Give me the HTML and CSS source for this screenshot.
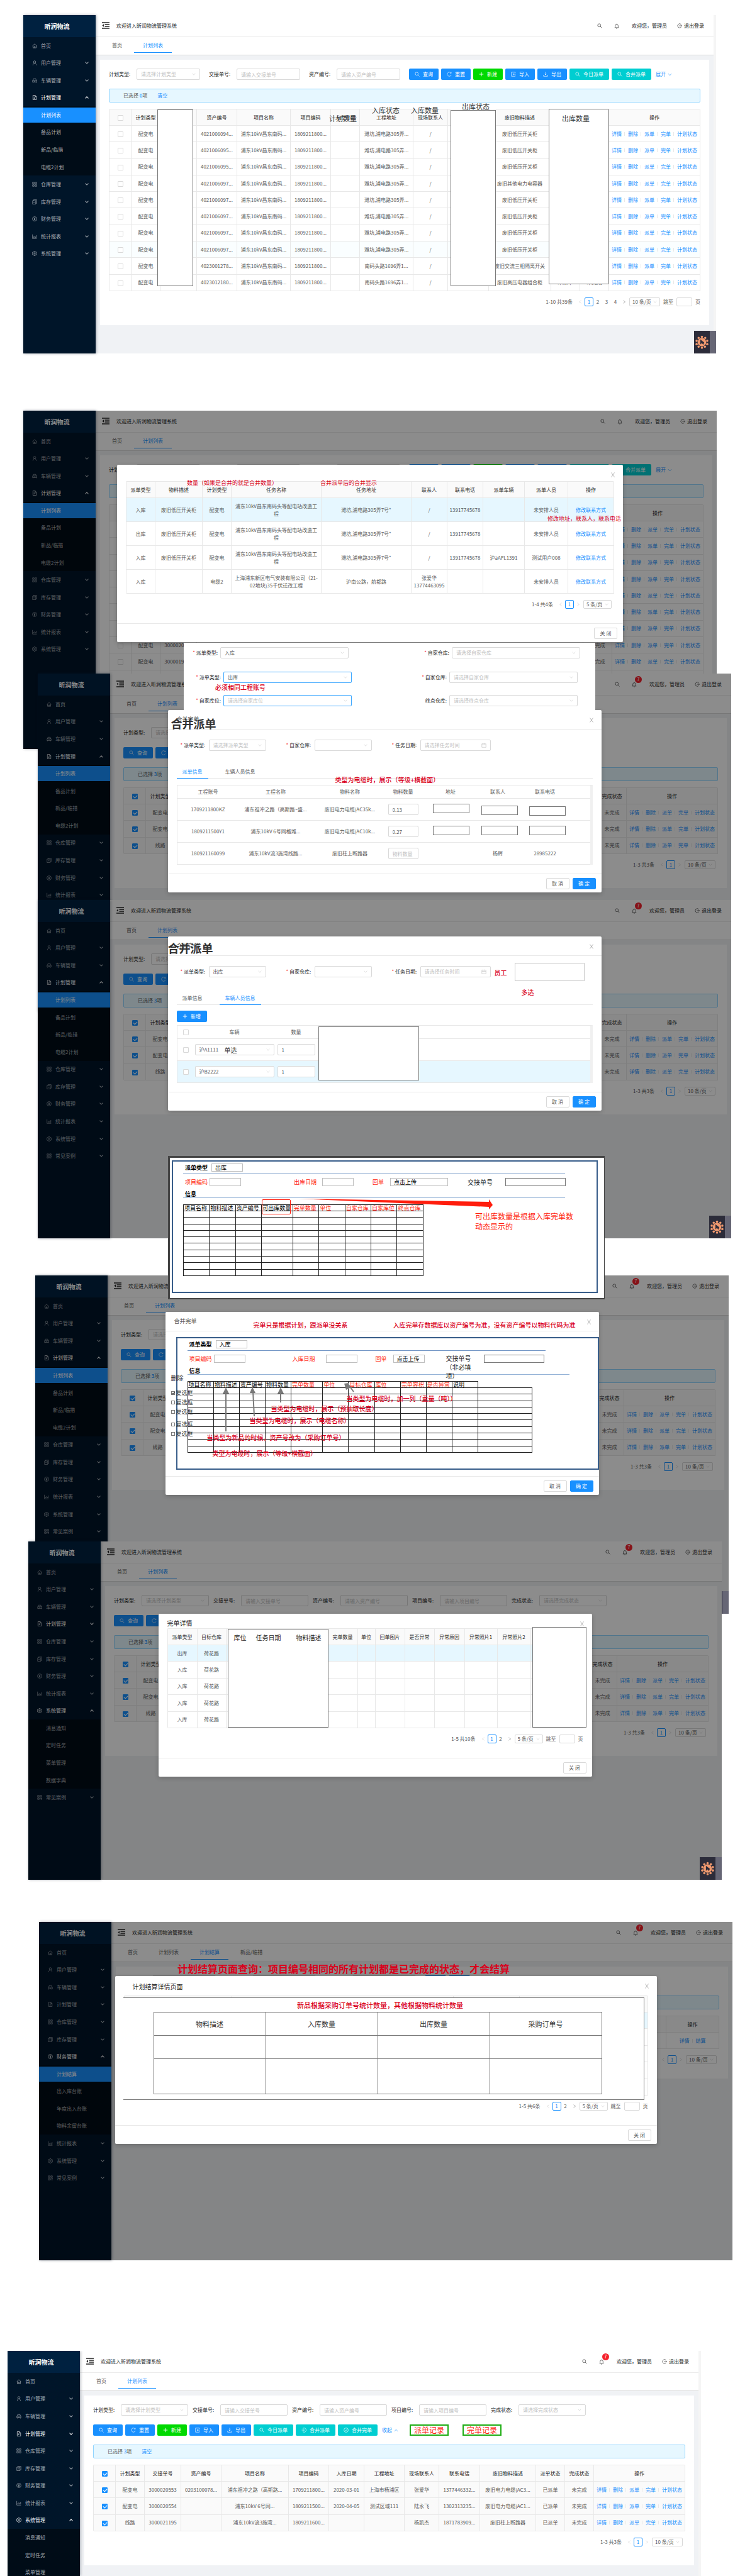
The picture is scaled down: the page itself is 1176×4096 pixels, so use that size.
FILE: index.html
```html
<!DOCTYPE html>
<html lang="zh-CN">
<head>
<meta charset="utf-8">
<title>昕润物流管理系统</title>
<link rel="stylesheet" href="styles.css">
</head>
<body>
<svg class="defs" aria-hidden="true">
  <symbol id="home" viewBox="0 0 16 16"><path d="M1 8.2 8 1.6l7 6.6M3 7v7.3h10V7M6.3 14.3V10h3.4v4.3"/></symbol>
  <symbol id="user" viewBox="0 0 16 16"><circle cx="8" cy="5" r="3.6"/><path d="M2.6 15.5c.2-4 2-6.3 5.4-6.9 3.4.6 5.2 2.9 5.4 6.9"/></symbol>
  <symbol id="car" viewBox="0 0 16 16"><path d="M1.5 7.5h13V13h-13zM3 7.500l1.300-5h7.400l1.300 5M3 13v2M13 13v2M5.500 10.500h5"/></symbol>
  <symbol id="file" viewBox="0 0 16 16"><path d="M2.700 1h7l3.800 3.800V15H2.700zM9.500 1v4h4M5.300 8h5.500M5.300 11h3.500"/></symbol>
  <symbol id="grid" viewBox="0 0 16 16"><path d="M1.500 1.500h5v5h-5zM9.500 1.500h5v5h-5zM1.500 9.500h5v5h-5zM9.500 9.500h5v5h-5z"/></symbol>
  <symbol id="copy" viewBox="0 0 16 16"><path d="M1.500 4h10v11h-10zM4.500 4V1.300h10V12.500h-3M4 9.500h5"/></symbol>
  <symbol id="pay" viewBox="0 0 16 16"><circle cx="8" cy="8" r="6.900"/><path d="m5.500 4 2.500 4 2.500-4M8 8v4.500M5.800 8.500h4.400M5.800 10.500h4.400"/></symbol>
  <symbol id="chart" viewBox="0 0 16 16"><path d="M1.300 1.500v13h13.500M4.700 12V8M8 12V6M11 12V8.500M13.500 12V4"/></symbol>
  <symbol id="gear" viewBox="0 0 16 16"><path d="M6.300 1h3.400l.5 2.100 1.600.9 2.100-.7 1.600 2.900L13.900 8l1.600 1.800-1.600 2.900-2.100-.7-1.600.9L9.700 15H6.300l-.5-2.100-1.600-.9-2.100.7L.5 9.800 2.100 8 .5 6.200l1.600-2.900 2.100.7 1.600-.9z"/><circle cx="8" cy="8" r="2.400"/></symbol>
  <symbol id="qr" viewBox="0 0 16 16"><path d="M1.500 1.500h5v5h-5zM9.500 1.500h5v5h-5zM1.500 9.500h5v5h-5zM9.500 9v6M12 9v3h3V9M12 14.500h3M4 3.500v1M12 3.500v1M4 11.500v1"/></symbol>
  <symbol id="search" viewBox="0 0 16 16"><circle cx="6.500" cy="6.500" r="4.800"/><path d="m10 10 5 5"/></symbol>
  <symbol id="bell" viewBox="0 0 16 16"><path d="M1.500 12.800h13M3.300 12.800V7a4.700 4.700 0 0 1 9.400 0v5.800M8 .5v2M6.300 15.200h3.400"/></symbol>
  <symbol id="exit" viewBox="0 0 16 16"><path d="M13 3.500A6.500 6.500 0 1 0 13 12.500M6.500 8H15M12.500 5.500 15 8l-2.500 2.500"/></symbol>
  <symbol id="fold" viewBox="0 0 16 14"><path d="M0 1h16M6 5h10M6 9h10M0 13h16" stroke-width="1.700"/><path d="M4 4v6L.5 7z" fill="currentColor" stroke="none"/></symbol>
  <symbol id="reload" viewBox="0 0 16 16"><path d="M13.500 4.500A6.500 6.500 0 1 0 14 10.500M14 1.500v3.300h-3.300"/></symbol>
  <symbol id="plus" viewBox="0 0 16 16"><path d="M8 1.500v13M1.500 8h13" stroke-width="1.800"/></symbol>
  <symbol id="import" viewBox="0 0 16 16"><path d="M13.500 4V1.500h-12v13h12V12M15 8H6M8.500 5.500 6 8l2.500 2.500"/></symbol>
  <symbol id="down" viewBox="0 0 16 16"><path d="M8 1v9M5.500 7.500 8 10l2.500-2.500M1.500 10.500v4h13v-4"/></symbol>
  <symbol id="login" viewBox="0 0 16 16"><path d="M4 3a6.700 6.700 0 1 1 0 10M1 8h8M6.500 5.500 9 8l-2.500 2.500"/></symbol>
  <symbol id="check" viewBox="0 0 16 16"><circle cx="8" cy="8" r="6.900"/><path d="m5 8 2.300 2.300L11 5.500"/></symbol>
  <symbol id="cal" viewBox="0 0 16 16"><path d="M1.500 3.500h13v11h-13zM1.500 7h13M5 1v4M11 1v4"/></symbol>
  <symbol id="v" viewBox="0 0 16 16"><path d="m2 4.500 6 7 6-7"/></symbol>
  <symbol id="up" viewBox="0 0 16 16"><path d="m2 11.500 6-7 6 7"/></symbol>
  <symbol id="lt" viewBox="0 0 16 16"><path d="m12 2-8 6 8 6"/></symbol>
  <symbol id="gt" viewBox="0 0 16 16"><path d="m4 2 8 6-8 6"/></symbol>
  <symbol id="x" viewBox="0 0 12 16"><path d="m1 1 10 14M11 1 1 15"/></symbol>
  <symbol id="sun" viewBox="0 0 40 40"><g fill="#f0996f" stroke="none"><circle cx="20" cy="20" r="13"/><circle cx="20" cy="4" r="3.400"/><circle cx="30" cy="7" r="3.400"/><circle cx="36" cy="16" r="3.400"/><circle cx="36" cy="26" r="3.400"/><circle cx="29" cy="34" r="3.400"/><circle cx="20" cy="37" r="3.400"/><circle cx="10" cy="34" r="3.400"/><circle cx="4" cy="26" r="3.400"/><circle cx="4" cy="16" r="3.400"/><circle cx="10" cy="7" r="3.400"/></g><path d="M15 12v15l5-4 4 5 3-7-12-9z" fill="#2c2c3a" stroke="none"/></symbol>
</svg>

<main class="board">

<!-- 1: plan list -->
<section class="win w1">
  <aside class="side"><h2>昕润物流</h2>
    <ul class="menu m13">
      <li><a href="#"><svg><use href="#home"/></svg>首页</a></li>
      <li class="g"><a href="#"><svg><use href="#user"/></svg>用户管理</a></li>
      <li class="g"><a href="#"><svg><use href="#car"/></svg>车辆管理</a></li>
      <li class="g open"><a href="#"><svg><use href="#file"/></svg>计划管理</a></li>
      <li class="sub on"><a href="#">计划列表</a></li>
      <li class="sub"><a href="#">备品计划</a></li>
      <li class="sub"><a href="#">新品/临措</a></li>
      <li class="sub"><a href="#">电缆2计划</a></li>
      <li class="g"><a href="#"><svg><use href="#grid"/></svg>仓库管理</a></li>
      <li class="g"><a href="#"><svg><use href="#copy"/></svg>库存管理</a></li>
      <li class="g"><a href="#"><svg><use href="#pay"/></svg>财务管理</a></li>
      <li class="g"><a href="#"><svg><use href="#chart"/></svg>统计报表</a></li>
      <li class="g"><a href="#"><svg><use href="#gear"/></svg>系统管理</a></li>
    </ul>
  </aside>
  <div class="main">
    <header class="top"><svg class="fold"><use href="#fold"/></svg><span>欢迎进入昕润物流管理系统</span>
      <div class="tools"><svg><use href="#search"/></svg><span class="bell"><svg><use href="#bell"/></svg></span><span>欢迎您，管理员</span><a href="#"><svg><use href="#exit"/></svg>退出登录</a></div></header>
    <nav class="tabs"><a href="#">首页</a><a href="#" class="on">计划列表</a></nav>
    <div class="panel p1">
      <form class="filter">
        <label><span>计划类型:</span><span class="sel"><select class="ph"><option>请选择计划类型</option></select><svg><use href="#v"/></svg></span></label>
        <label><span>交接单号:</span><input type="text" placeholder="请输入交接单号"></label>
        <label><span>资产编号:</span><input type="text" placeholder="请输入资产编号"></label>
        <div class="btns"><button type="button" class="btn"><svg><use href="#search"/></svg>查询</button><button type="button" class="btn"><svg><use href="#reload"/></svg>重置</button><button type="button" class="btn green"><svg><use href="#plus"/></svg>新建</button><button type="button" class="btn"><svg><use href="#import"/></svg>导入</button><button type="button" class="btn"><svg><use href="#down"/></svg>导出</button><button type="button" class="btn cyan"><svg><use href="#search"/></svg>今日派单</button><button type="button" class="btn cyan"><svg><use href="#search"/></svg>合并派单</button><a href="#" class="more">展开<svg><use href="#v"/></svg></a></div>
      </form>
      <div class="alert">已选择 <b>0</b>项<a href="#">清空</a></div>
      <table class="grid t1">
        <thead><tr><th><input type="checkbox" aria-label="全选"></th><th>计划类型</th><th></th><th>资产编号</th><th>项目名称</th><th>项目编码</th><th>入库日期</th><th>工程地址</th><th>现场联系人</th><th></th><th>废旧物料描述</th><th></th><th></th><th>操作</th></tr></thead>
        <tbody>
        <tr><td><input type="checkbox" aria-label="选择"></td><td>配变电</td><td></td><td>4021006094...</td><td>浦东10kV昌东南码...</td><td>1809211800...</td><td></td><td>潍坊,浦电路305弄...</td><td>/</td><td></td><td>废旧低压开关柜</td><td></td><td></td><td class="ops"><a href="#">详情</a><a href="#">删除</a><a href="#">派单</a><a href="#">完单</a><a href="#">计划状态</a></td></tr>
        <tr><td><input type="checkbox" aria-label="选择"></td><td>配变电</td><td></td><td>4021006095...</td><td>浦东10kV昌东南码...</td><td>1809211800...</td><td></td><td>潍坊,浦电路305弄...</td><td>/</td><td></td><td>废旧低压开关柜</td><td></td><td></td><td class="ops"><a href="#">详情</a><a href="#">删除</a><a href="#">派单</a><a href="#">完单</a><a href="#">计划状态</a></td></tr>
        <tr><td><input type="checkbox" aria-label="选择"></td><td>配变电</td><td></td><td>4021006095...</td><td>浦东10kV昌东南码...</td><td>1809211800...</td><td></td><td>潍坊,浦电路305弄...</td><td>/</td><td></td><td>废旧低压开关柜</td><td></td><td></td><td class="ops"><a href="#">详情</a><a href="#">删除</a><a href="#">派单</a><a href="#">完单</a><a href="#">计划状态</a></td></tr>
        <tr><td><input type="checkbox" aria-label="选择"></td><td>配变电</td><td></td><td>4021006097...</td><td>浦东10kV昌东南码...</td><td>1809211800...</td><td></td><td>潍坊,浦电路305弄...</td><td>/</td><td></td><td>废旧其他电力电容器</td><td></td><td></td><td class="ops"><a href="#">详情</a><a href="#">删除</a><a href="#">派单</a><a href="#">完单</a><a href="#">计划状态</a></td></tr>
        <tr><td><input type="checkbox" aria-label="选择"></td><td>配变电</td><td></td><td>4021006097...</td><td>浦东10kV昌东南码...</td><td>1809211800...</td><td></td><td>潍坊,浦电路305弄...</td><td>/</td><td></td><td>废旧低压开关柜</td><td></td><td></td><td class="ops"><a href="#">详情</a><a href="#">删除</a><a href="#">派单</a><a href="#">完单</a><a href="#">计划状态</a></td></tr>
        <tr><td><input type="checkbox" aria-label="选择"></td><td>配变电</td><td></td><td>4021006097...</td><td>浦东10kV昌东南码...</td><td>1809211800...</td><td></td><td>潍坊,浦电路305弄...</td><td>/</td><td></td><td>废旧低压开关柜</td><td></td><td></td><td class="ops"><a href="#">详情</a><a href="#">删除</a><a href="#">派单</a><a href="#">完单</a><a href="#">计划状态</a></td></tr>
        <tr><td><input type="checkbox" aria-label="选择"></td><td>配变电</td><td></td><td>4021006097...</td><td>浦东10kV昌东南码...</td><td>1809211800...</td><td></td><td>潍坊,浦电路305弄...</td><td>/</td><td></td><td>废旧低压开关柜</td><td></td><td></td><td class="ops"><a href="#">详情</a><a href="#">删除</a><a href="#">派单</a><a href="#">完单</a><a href="#">计划状态</a></td></tr>
        <tr class="tint"><td><input type="checkbox" aria-label="选择"></td><td>配变电</td><td></td><td>4021006097...</td><td>浦东10kV昌东南码...</td><td>1809211800...</td><td></td><td>潍坊,浦电路305弄...</td><td>/</td><td></td><td>废旧低压开关柜</td><td></td><td></td><td class="ops"><a href="#">详情</a><a href="#">删除</a><a href="#">派单</a><a href="#">完单</a><a href="#">计划状态</a></td></tr>
        <tr><td><input type="checkbox" aria-label="选择"></td><td>配变电</td><td></td><td>4023001278...</td><td>浦东10kV昌东南码...</td><td>1809211800...</td><td></td><td>南码头路1696弄1...</td><td>/</td><td></td><td>废旧交流三相隔离开关</td><td></td><td></td><td class="ops"><a href="#">详情</a><a href="#">删除</a><a href="#">派单</a><a href="#">完单</a><a href="#">计划状态</a></td></tr>
        <tr><td><input type="checkbox" aria-label="选择"></td><td>配变电</td><td></td><td>4023012180...</td><td>浦东10kV昌东南码...</td><td>1809211800...</td><td></td><td>南码头路1696弄1...</td><td>/</td><td></td><td>废旧高压电器组合柜</td><td>未派单</td><td>未完成</td><td class="ops"><a href="#">详情</a><a href="#">删除</a><a href="#">派单</a><a href="#">完单</a><a href="#">计划状态</a></td></tr>
        </tbody>
      </table>
      <div class="pager"><span>1-10 共39条</span><button type="button" aria-label="上一页"><svg class="dim"><use href="#lt"/></svg></button><button type="button" class="on">1</button><button type="button">2</button><button type="button">3</button><button type="button">4</button><button type="button" aria-label="下一页"><svg><use href="#gt"/></svg></button><span class="sel"><select aria-label="每页条数"><option>10 条/页</option></select><svg><use href="#v"/></svg></span><label>跳至<input type="text">页</label></div>
    </div>
  </div>
  <i class="scroll"></i>
  <p class="mark n-outstate">出库状态</p>
  <div class="cover c-order"></div><div class="cover c-out"></div><div class="cover c-qty"></div>
  <p class="mark n-plan">计划数量</p><p class="mark n-instate">入库状态</p><p class="mark n-inqty">入库数量</p><p class="mark n-outqty">出库数量</p>
  <div class="widget"><svg><use href="#sun"/></svg></div>
</section>

<!-- 2: dispatch records dialog -->
<section class="win w2">
  <aside class="side"><h2>昕润物流</h2>
    <ul class="menu m13">
      <li><a href="#"><svg><use href="#home"/></svg>首页</a></li>
      <li class="g"><a href="#"><svg><use href="#user"/></svg>用户管理</a></li>
      <li class="g"><a href="#"><svg><use href="#car"/></svg>车辆管理</a></li>
      <li class="g open"><a href="#"><svg><use href="#file"/></svg>计划管理</a></li>
      <li class="sub on"><a href="#">计划列表</a></li>
      <li class="sub"><a href="#">备品计划</a></li>
      <li class="sub"><a href="#">新品/临措</a></li>
      <li class="sub"><a href="#">电缆2计划</a></li>
      <li class="g"><a href="#"><svg><use href="#grid"/></svg>仓库管理</a></li>
      <li class="g"><a href="#"><svg><use href="#copy"/></svg>库存管理</a></li>
      <li class="g"><a href="#"><svg><use href="#pay"/></svg>财务管理</a></li>
      <li class="g"><a href="#"><svg><use href="#chart"/></svg>统计报表</a></li>
      <li class="g"><a href="#"><svg><use href="#gear"/></svg>系统管理</a></li>
    </ul>
  </aside>
  <div class="main">
    <header class="top"><svg class="fold"><use href="#fold"/></svg><span>欢迎进入昕润物流管理系统</span>
      <div class="tools"><svg><use href="#search"/></svg><span class="bell"><svg><use href="#bell"/></svg></span><span>欢迎您，管理员</span><a href="#"><svg><use href="#exit"/></svg>退出登录</a></div></header>
    <nav class="tabs"><a href="#">首页</a><a href="#" class="on">计划列表</a></nav>
    <div class="panel p2">
      <form class="filter">
        <label><span>计划类型:</span><span class="sel"><select aria-label="计划类型"></select></span></label>
        <label><span></span><input type="text" aria-label="交接单号"></label>
        <label><span></span><input type="text" aria-label="资产编号"></label>
        <div class="btns"><button type="button" class="btn"><svg><use href="#search"/></svg>查询</button><button type="button" class="btn"><svg><use href="#reload"/></svg>重置</button><button type="button" class="btn green"><svg><use href="#plus"/></svg>新建</button><button type="button" class="btn"><svg><use href="#import"/></svg>导入</button><button type="button" class="btn"><svg><use href="#down"/></svg>导出</button><button type="button" class="btn cyan"><svg><use href="#search"/></svg>今日派单</button><button type="button" class="btn cyan"><svg><use href="#search"/></svg>合并派单</button><a href="#" class="more">展开<svg><use href="#v"/></svg></a></div>
      </form>
      <div class="alert"></div>
      <table class="grid t2">
        <thead><tr><th></th><th></th><th></th><th></th><th></th><th>操作</th></tr></thead>
        <tbody>
        <tr><td></td><td></td><td></td><td></td><td></td><td class="ops"><a href="#">详情</a><a href="#">删除</a><a href="#">派单</a><a href="#">完单</a><a href="#">计划状态</a></td></tr>
        <tr><td></td><td></td><td></td><td></td><td></td><td class="ops"><a href="#">详情</a><a href="#">删除</a><a href="#">派单</a><a href="#">完单</a><a href="#">计划状态</a></td></tr>
        <tr><td></td><td></td><td></td><td></td><td></td><td class="ops"><a href="#">详情</a><a href="#">删除</a><a href="#">派单</a><a href="#">完单</a><a href="#">计划状态</a></td></tr>
        <tr><td></td><td></td><td></td><td></td><td></td><td class="ops"><a href="#">详情</a><a href="#">删除</a><a href="#">派单</a><a href="#">完单</a><a href="#">计划状态</a></td></tr>
        <tr><td></td><td></td><td></td><td></td><td></td><td class="ops"><a href="#">详情</a><a href="#">删除</a><a href="#">派单</a><a href="#">完单</a><a href="#">计划状态</a></td></tr>
        <tr><td></td><td></td><td></td><td></td><td></td><td class="ops"><a href="#">详情</a><a href="#">删除</a><a href="#">派单</a><a href="#">完单</a><a href="#">计划状态</a></td></tr>
        <tr><td></td><td></td><td></td><td></td><td></td><td class="ops"><a href="#">详情</a><a href="#">删除</a><a href="#">派单</a><a href="#">完单</a><a href="#">计划状态</a></td></tr>
        <tr><td><input type="checkbox" aria-label="选择"></td><td>配变电</td><td>3000020550</td><td></td><td>未完成</td><td class="ops"><a href="#">详情</a><a href="#">删除</a><a href="#">派单</a><a href="#">完单</a><a href="#">计划状态</a></td></tr>
        <tr><td><input type="checkbox" aria-label="选择"></td><td>配变电</td><td>3000019550</td><td></td><td>未完成</td><td class="ops"><a href="#">详情</a><a href="#">删除</a><a href="#">派单</a><a href="#">完单</a><a href="#">计划状态</a></td></tr>
        <tr><td></td><td></td><td></td><td></td><td></td><td></td></tr>
        </tbody>
      </table>
    </div>
  </div>
  <div class="mask"><div class="modal d2" role="dialog" aria-label="派单记录">
    <button type="button" class="close" aria-label="关闭"><svg><use href="#x"/></svg></button>
    <div class="body">
      <table class="grid t-disp">
        <thead><tr><th>派单类型</th><th>物料描述</th><th>计划类型</th><th>任务名称</th><th>任务地址</th><th>联系人</th><th>联系电话</th><th>派单车辆</th><th>派单人员</th><th>操作</th></tr></thead>
        <tbody>
        <tr class="hit"><td>入库</td><td>废旧低压开关柜</td><td>配变电</td><td>浦东10kV昌东南码头等配电站改造工程</td><td>潍坊,浦电路305弄7号*</td><td>/</td><td>13917745678</td><td></td><td>未安排人员</td><td><a href="#">修改联系方式</a></td></tr>
        <tr><td>出库</td><td>废旧低压开关柜</td><td>配变电</td><td>浦东10kV昌东南码头等配电站改造工程</td><td>潍坊,浦电路305弄7号*</td><td>/</td><td>13917745678</td><td></td><td>未安排人员</td><td><a href="#">修改联系方式</a></td></tr>
        <tr><td>入库</td><td>废旧低压开关柜</td><td>配变电</td><td>浦东10kV昌东南码头等配电站改造工程</td><td>潍坊,浦电路305弄7号*</td><td>/</td><td>13917745678</td><td>沪aAFL1391</td><td>测试用户008</td><td><a href="#">修改联系方式</a></td></tr>
        <tr><td>入库</td><td></td><td>电缆2</td><td>上海浦东新区电气安装有限公司（21-02地块)35千伏迁改工程</td><td>沪南公路，航都路</td><td>张爱华 13774463095</td><td></td><td></td><td>未安排人员</td><td><a href="#">修改联系方式</a></td></tr>
        </tbody>
      </table>
      <div class="pager in"><span>1-4 共4条</span><button type="button" aria-label="上一页"><svg class="dim"><use href="#lt"/></svg></button><button type="button" class="on">1</button><button type="button" aria-label="下一页"><svg class="dim"><use href="#gt"/></svg></button><span class="sel"><select aria-label="每页条数"><option>5 条/页</option></select><svg><use href="#v"/></svg></span></div>
    </div>
    <footer><button type="button" class="plain">关 闭</button></footer>
    <p class="red n-merge">数量（如果是合并的就是合并数量）</p><p class="red n-after">合并派单后的合并显示</p><p class="red n-contact">修改地址，联系人，联系电话</p>
  </div></div>
</section>

<!-- 3: merge dispatch, order info -->
<section class="win w3">
  <aside class="side"><h2>昕润物流</h2>
    <ul class="menu">
      <li><a href="#"><svg><use href="#home"/></svg>首页</a></li>
      <li class="g"><a href="#"><svg><use href="#user"/></svg>用户管理</a></li>
      <li class="g"><a href="#"><svg><use href="#car"/></svg>车辆管理</a></li>
      <li class="g open"><a href="#"><svg><use href="#file"/></svg>计划管理</a></li>
      <li class="sub on"><a href="#">计划列表</a></li>
      <li class="sub"><a href="#">备品计划</a></li>
      <li class="sub"><a href="#">新品/临措</a></li>
      <li class="sub"><a href="#">电缆2计划</a></li>
      <li class="g"><a href="#"><svg><use href="#grid"/></svg>仓库管理</a></li>
      <li class="g"><a href="#"><svg><use href="#copy"/></svg>库存管理</a></li>
      <li class="g"><a href="#"><svg><use href="#pay"/></svg>财务管理</a></li>
      <li class="g"><a href="#"><svg><use href="#chart"/></svg>统计报表</a></li>
    </ul>
  </aside>
  <div class="main">
    <header class="top"><svg class="fold"><use href="#fold"/></svg><span>欢迎进入昕润物流管理系统</span>
      <div class="tools"><svg><use href="#search"/></svg><span class="bell"><svg><use href="#bell"/></svg><b>7</b></span><span>欢迎您，管理员</span><a href="#"><svg><use href="#exit"/></svg>退出登录</a></div></header>
    <nav class="tabs"><a href="#">首页</a><a href="#" class="on">计划列表</a></nav>
    <div class="panel">
      <form class="filter wide"><label><span>计划类型:</span><span class="sel"><select class="ph"><option>请选择计划类型</option></select></span></label></form>
      <div class="btns"><button type="button" class="btn"><svg><use href="#search"/></svg>查询</button><button type="button" class="btn"><svg><use href="#reload"/></svg>重置</button></div>
      <div class="alert">已选择 <b>3</b>项</div>
      <table class="grid t3">
        <thead><tr><th><input type="checkbox" checked aria-label="全选"></th><th>计划类型</th><th></th><th>完成状态</th><th>操作</th></tr></thead>
        <tbody>
        <tr><td><input type="checkbox" checked aria-label="选择"></td><td>配变电</td><td></td><td>未完成</td><td class="ops"><a href="#">详情</a><a href="#">删除</a><a href="#">派单</a><a href="#">完单</a><a href="#">计划状态</a></td></tr>
        <tr><td><input type="checkbox" checked aria-label="选择"></td><td>配变电</td><td></td><td>未完成</td><td class="ops"><a href="#">详情</a><a href="#">删除</a><a href="#">派单</a><a href="#">完单</a><a href="#">计划状态</a></td></tr>
        <tr><td><input type="checkbox" checked aria-label="选择"></td><td>线路</td><td></td><td>未完成</td><td class="ops"><a href="#">详情</a><a href="#">删除</a><a href="#">派单</a><a href="#">完单</a><a href="#">计划状态</a></td></tr>
        </tbody>
      </table>
      <div class="pager in"><span>1-3 共3条</span><button type="button" aria-label="上一页"><svg class="dim"><use href="#lt"/></svg></button><button type="button" class="on">1</button><button type="button" aria-label="下一页"><svg class="dim"><use href="#gt"/></svg></button><span class="sel"><select aria-label="每页条数"><option>10 条/页</option></select><svg><use href="#v"/></svg></span></div>
    </div>
  </div>
  <div class="mask"><div class="modal d3" role="dialog" aria-label="合并派单">
    <button type="button" class="close" aria-label="关闭"><svg><use href="#x"/></svg></button>
    <header>合并完单</header>
    <div class="body">
      <div class="fields">
        <label><span><em>*</em> 派单类型:</span><span class="sel"><select class="ph"><option>请选择派单类型</option></select><svg><use href="#v"/></svg></span></label>
        <label><span><em>*</em> 自家仓库:</span><span class="sel"><select></select><svg><use href="#v"/></svg></span></label>
        <label><span><em>*</em> 任务日期:</span><span class="sel date"><input type="text" placeholder="请选择任务时间"><svg><use href="#cal"/></svg></span></label>
      </div>
      <nav class="mtabs"><a href="#" class="on">派单信息</a><a href="#">车辆人员信息</a></nav>
      <table class="rows t-mat">
        <thead><tr><th>工程账号</th><th>工程名称</th><th>物料名称</th><th>物料数量</th><th>地址</th><th>联系人</th><th>联系电话</th><th></th></tr></thead>
        <tbody>
        <tr><td>1709211800KZ</td><td>浦东祖冲之路（高斯路~盛...</td><td>废旧电力电缆(AC35k...</td><td><input type="text" value="0.13" aria-label="物料数量"></td><td></td><td></td><td></td><td></td></tr>
        <tr><td>1809211500Y1</td><td>浦东10kV 6号网格潍...</td><td>废旧电力电缆(AC10k...</td><td><input type="text" value="0.27" aria-label="物料数量"></td><td></td><td></td><td></td><td></td></tr>
        <tr><td>180921160099</td><td>浦东10kV流3施湾线路...</td><td>废旧柱上断路器</td><td><input type="text" placeholder="物料数量" aria-label="物料数量"></td><td></td><td>杨辉</td><td>28985222</td><td></td></tr>
        </tbody>
      </table>
    </div>
    <footer><button type="button" class="plain">取 消</button><button type="button" class="plain ok">确 定</button></footer>
    <h3 class="n-title">合并派单</h3>
    <p class="red big n-cable">类型为电缆时，展示（等级+横截面）</p>
    <input class="wire a1" aria-label="地址"><input class="wire b1" aria-label="联系人"><input class="wire e1" aria-label="联系电话">
    <input class="wire a2" aria-label="地址"><input class="wire b2" aria-label="联系人"><input class="wire e2" aria-label="联系电话">
  </div></div>
  <form class="variants">
    <div class="vrow"><label><span><em>*</em> 派单类型:</span><span class="sel"><select><option>入库</option></select><svg><use href="#v"/></svg></span></label><label><span><em>*</em> 自家仓库:</span><span class="sel"><select class="ph"><option>请选择自家仓库</option></select><svg><use href="#v"/></svg></span></label></div>
    <div class="vrow"><label><span><em>*</em> 派单类型:</span><span class="sel focus"><select><option>出库</option></select><svg><use href="#v"/></svg></span></label><label><span><em>*</em> 自家仓库:</span><span class="sel"><select class="ph"><option>请选择自家仓库</option></select><svg><use href="#v"/></svg></span></label></div>
    <p class="red big n-same">必须相同工程账号</p>
    <div class="vrow"><label><span><em>*</em> 自家库位:</span><span class="sel focus"><select class="ph"><option>请选择自家库位</option></select><svg><use href="#v"/></svg></span></label><label><span>终点仓库:</span><span class="sel"><select class="ph"><option>请选择终点仓库</option></select><svg><use href="#v"/></svg></span></label></div>
  </form>
</section>

<!-- 4: merge dispatch, vehicles -->
<section class="win w4">
  <aside class="side"><h2>昕润物流</h2>
    <ul class="menu">
      <li><a href="#"><svg><use href="#home"/></svg>首页</a></li>
      <li class="g"><a href="#"><svg><use href="#user"/></svg>用户管理</a></li>
      <li class="g"><a href="#"><svg><use href="#car"/></svg>车辆管理</a></li>
      <li class="g open"><a href="#"><svg><use href="#file"/></svg>计划管理</a></li>
      <li class="sub on"><a href="#">计划列表</a></li>
      <li class="sub"><a href="#">备品计划</a></li>
      <li class="sub"><a href="#">新品/临措</a></li>
      <li class="sub"><a href="#">电缆2计划</a></li>
      <li class="g"><a href="#"><svg><use href="#grid"/></svg>仓库管理</a></li>
      <li class="g"><a href="#"><svg><use href="#copy"/></svg>库存管理</a></li>
      <li class="g"><a href="#"><svg><use href="#pay"/></svg>财务管理</a></li>
      <li class="g"><a href="#"><svg><use href="#chart"/></svg>统计报表</a></li>
      <li class="g"><a href="#"><svg><use href="#gear"/></svg>系统管理</a></li>
      <li class="g"><a href="#"><svg><use href="#qr"/></svg>常见案例</a></li>
    </ul>
  </aside>
  <div class="main">
    <header class="top"><svg class="fold"><use href="#fold"/></svg><span>欢迎进入昕润物流管理系统</span>
      <div class="tools"><svg><use href="#search"/></svg><span class="bell"><svg><use href="#bell"/></svg><b>7</b></span><span>欢迎您，管理员</span><a href="#"><svg><use href="#exit"/></svg>退出登录</a></div></header>
    <nav class="tabs"><a href="#">首页</a><a href="#" class="on">计划列表</a></nav>
    <div class="panel">
      <form class="filter wide"><label><span>计划类型:</span><span class="sel"><select class="ph"><option>请选择计划类型</option></select></span></label></form>
      <div class="btns"><button type="button" class="btn"><svg><use href="#search"/></svg>查询</button><button type="button" class="btn"><svg><use href="#reload"/></svg>重置</button></div>
      <div class="alert">已选择 <b>3</b>项</div>
      <table class="grid t3">
        <thead><tr><th><input type="checkbox" checked aria-label="全选"></th><th>计划类型</th><th></th><th>完成状态</th><th>操作</th></tr></thead>
        <tbody>
        <tr><td><input type="checkbox" checked aria-label="选择"></td><td>配变电</td><td></td><td>未完成</td><td class="ops"><a href="#">详情</a><a href="#">删除</a><a href="#">派单</a><a href="#">完单</a><a href="#">计划状态</a></td></tr>
        <tr><td><input type="checkbox" checked aria-label="选择"></td><td>配变电</td><td></td><td>未完成</td><td class="ops"><a href="#">详情</a><a href="#">删除</a><a href="#">派单</a><a href="#">完单</a><a href="#">计划状态</a></td></tr>
        <tr><td><input type="checkbox" checked aria-label="选择"></td><td>线路</td><td></td><td>未完成</td><td class="ops"><a href="#">详情</a><a href="#">删除</a><a href="#">派单</a><a href="#">完单</a><a href="#">计划状态</a></td></tr>
        </tbody>
      </table>
      <div class="pager in"><span>1-3 共3条</span><button type="button" aria-label="上一页"><svg class="dim"><use href="#lt"/></svg></button><button type="button" class="on">1</button><button type="button" aria-label="下一页"><svg class="dim"><use href="#gt"/></svg></button><span class="sel"><select aria-label="每页条数"><option>10 条/页</option></select><svg><use href="#v"/></svg></span></div>
    </div>
  </div>
  <div class="mask"><div class="modal d4" role="dialog" aria-label="合并派单">
    <button type="button" class="close" aria-label="关闭"><svg><use href="#x"/></svg></button>
    <header>合并完单</header>
    <div class="body">
      <div class="fields">
        <label><span><em>*</em> 派单类型:</span><span class="sel"><select><option>出库</option></select><svg><use href="#v"/></svg></span></label>
        <label><span><em>*</em> 自家仓库:</span><span class="sel"><select></select><svg><use href="#v"/></svg></span></label>
        <label><span><em>*</em> 任务日期:</span><span class="sel date"><input type="text" placeholder="请选择任务时间"><svg><use href="#cal"/></svg></span></label>
      </div>
      <nav class="mtabs"><a href="#">派单信息</a><a href="#" class="on">车辆人员信息</a></nav>
      <button type="button" class="btn add"><svg><use href="#plus"/></svg>新增</button>
      <table class="rows t-car">
        <thead><tr><th><input type="checkbox" aria-label="全选"></th><th>车辆</th><th>数量</th><th></th></tr></thead>
        <tbody>
        <tr><td><input type="checkbox" aria-label="选择"></td><td><span class="sel"><select aria-label="车辆"><option>沪A1111</option></select><svg><use href="#v"/></svg></span></td><td><input type="text" value="1" aria-label="数量"></td><td></td></tr>
        <tr class="hit"><td><input type="checkbox" aria-label="选择"></td><td><span class="sel"><select aria-label="车辆"><option>沪B2222</option></select><svg><use href="#v"/></svg></span></td><td><input type="text" value="1" aria-label="数量"></td><td></td></tr>
        </tbody>
      </table>
    </div>
    <footer><button type="button" class="plain">取 消</button><button type="button" class="plain ok">确 定</button></footer>
    <h3 class="n-title flush">合并派单</h3>
    <label class="red big n-staff" for="staff">员工</label><input id="staff" class="wire staff"><p class="red big n-multi">多选</p><p class="mark n-single">单选</p><div class="cover c-car"></div>
  </div></div>
  <div class="widget"><svg><use href="#sun"/></svg></div>
</section>

<!-- 5: merge completion -->
<section class="win w5">
  <aside class="side"><h2>昕润物流</h2>
    <ul class="menu">
      <li><a href="#"><svg><use href="#home"/></svg>首页</a></li>
      <li class="g"><a href="#"><svg><use href="#user"/></svg>用户管理</a></li>
      <li class="g"><a href="#"><svg><use href="#car"/></svg>车辆管理</a></li>
      <li class="g open"><a href="#"><svg><use href="#file"/></svg>计划管理</a></li>
      <li class="sub on"><a href="#">计划列表</a></li>
      <li class="sub"><a href="#">备品计划</a></li>
      <li class="sub"><a href="#">新品/临措</a></li>
      <li class="sub"><a href="#">电缆2计划</a></li>
      <li class="g"><a href="#"><svg><use href="#grid"/></svg>仓库管理</a></li>
      <li class="g"><a href="#"><svg><use href="#copy"/></svg>库存管理</a></li>
      <li class="g"><a href="#"><svg><use href="#pay"/></svg>财务管理</a></li>
      <li class="g"><a href="#"><svg><use href="#chart"/></svg>统计报表</a></li>
      <li class="g"><a href="#"><svg><use href="#gear"/></svg>系统管理</a></li>
      <li class="g"><a href="#"><svg><use href="#qr"/></svg>常见案例</a></li>
    </ul>
  </aside>
  <div class="main">
    <header class="top"><svg class="fold"><use href="#fold"/></svg><span>欢迎进入昕润物流管理系统</span>
      <div class="tools"><svg><use href="#search"/></svg><span class="bell"><svg><use href="#bell"/></svg><b>7</b></span><span>欢迎您，管理员</span><a href="#"><svg><use href="#exit"/></svg>退出登录</a></div></header>
    <nav class="tabs"><a href="#">首页</a><a href="#" class="on">计划列表</a></nav>
    <div class="panel">
      <form class="filter wide"><label><span>计划类型:</span><span class="sel"><select class="ph"><option>请选择计划类型</option></select></span></label></form>
      <div class="btns"><button type="button" class="btn"><svg><use href="#search"/></svg>查询</button><button type="button" class="btn"><svg><use href="#reload"/></svg>重置</button></div>
      <div class="alert">已选择 <b>3</b>项</div>
      <table class="grid t3">
        <thead><tr><th><input type="checkbox" checked aria-label="全选"></th><th>计划类型</th><th></th><th>完成状态</th><th>操作</th></tr></thead>
        <tbody>
        <tr><td><input type="checkbox" checked aria-label="选择"></td><td>配变电</td><td></td><td>未完成</td><td class="ops"><a href="#">详情</a><a href="#">删除</a><a href="#">派单</a><a href="#">完单</a><a href="#">计划状态</a></td></tr>
        <tr><td><input type="checkbox" checked aria-label="选择"></td><td>配变电</td><td></td><td>未完成</td><td class="ops"><a href="#">详情</a><a href="#">删除</a><a href="#">派单</a><a href="#">完单</a><a href="#">计划状态</a></td></tr>
        <tr><td><input type="checkbox" checked aria-label="选择"></td><td>线路</td><td></td><td>未完成</td><td class="ops"><a href="#">详情</a><a href="#">删除</a><a href="#">派单</a><a href="#">完单</a><a href="#">计划状态</a></td></tr>
        </tbody>
      </table>
      <div class="pager in"><span>1-3 共3条</span><button type="button" aria-label="上一页"><svg class="dim"><use href="#lt"/></svg></button><button type="button" class="on">1</button><button type="button" aria-label="下一页"><svg class="dim"><use href="#gt"/></svg></button><span class="sel"><select aria-label="每页条数"><option>10 条/页</option></select><svg><use href="#v"/></svg></span></div>
    </div>
  </div>
  <div class="widget"><svg><use href="#sun"/></svg></div>
  <div class="mask"><div class="modal d5" role="dialog" aria-label="合并完单">
    <button type="button" class="close" aria-label="关闭"><svg><use href="#x"/></svg></button>
    <header>合并完单</header>
    <div class="body">
      <div class="sheet">
        <div class="ln one"><label for="in-type">派单类型</label><input id="in-type" type="text" value="入库"></div>
        <div class="ln two">
          <label for="in-code">项目编码</label><input id="in-code" type="text">
          <label for="in-date">入库日期</label><input id="in-date" type="text">
          <span>回单</span><button type="button">点击上传</button>
          <label for="in-no" class="no">交接单号（非必填项）</label><input id="in-no" type="text" class="dark">
        </div>
        <h4>信息</h4>
        <table class="xl x-in">
          <thead><tr><th>项目名称</th><th>物料描述</th><th>资产编号</th><th>物料数量</th><th class="r">完单数量</th><th class="r">单位</th><th class="r">目标仓库</th><th class="r">库位</th><th class="r">完单容积</th><th class="r">是否异常</th><th>说明</th><td class="none"></td></tr></thead>
          <tbody>
          <tr><td></td><td></td><td></td><td></td><td></td><td></td><td></td><td></td><td></td><td></td><td></td><td></td></tr>
          <tr><td></td><td></td><td></td><td></td><td></td><td></td><td></td><td></td><td></td><td></td><td></td><td></td></tr>
          <tr><td></td><td></td><td></td><td></td><td></td><td></td><td></td><td></td><td></td><td></td><td></td><td></td></tr>
          <tr><td></td><td></td><td></td><td></td><td></td><td></td><td></td><td></td><td></td><td></td><td></td><td></td></tr>
          <tr><td></td><td></td><td></td><td></td><td></td><td></td><td></td><td></td><td></td><td></td><td></td><td></td></tr>
          <tr><td></td><td></td><td></td><td></td><td></td><td></td><td></td><td></td><td></td><td></td><td></td><td></td></tr>
          <tr><td></td><td></td><td></td><td></td><td></td><td></td><td></td><td></td><td></td><td></td><td></td><td></td></tr>
          <tr><td></td><td></td><td></td><td></td><td></td><td></td><td></td><td></td><td></td><td></td><td></td><td></td></tr>
          <tr><td></td><td></td><td></td><td></td><td></td><td></td><td></td><td></td><td></td><td></td><td></td><td></td></tr>
          <tr><td></td><td></td><td></td><td></td><td></td><td></td><td></td><td></td><td></td><td></td><td></td><td></td></tr>
          </tbody>
        </table>
      </div>
    </div>
    <footer><button type="button" class="plain">取 消</button><button type="button" class="plain ok">确 定</button></footer>
    <p class="red big n-only">完单只是根据计划，跟派单没关系</p><p class="red big n-asset">入库完单存数据库以资产编号为准，没有资产编号以物料代码为准</p>
    <p class="mark n-del">删除</p>
    <label class="tick k1"><input type="checkbox" checked>复选框</label><label class="tick k2"><input type="checkbox">复选框</label><label class="tick k3"><input type="checkbox">复选框</label><label class="tick k4"><input type="checkbox">复选框</label><label class="tick k5"><input type="checkbox">复选框</label>
    <svg class="arrows" viewBox="0 0 689 292"><g stroke="#797979" stroke-width="2" fill="none"><path d="M96 190V127M141 166l-2-40M183 144V127M299 127l-8-11"/></g><g fill="#797979"><path d="M96 120l5 10H91zM138 119l5 10h-9zM183 120l5 10h-10zM284 114l7-1 2 8-6 3z"/></g></svg>
    <p class="red big n-weight">当类型为电缆时，加一列（重量（吨））</p><p class="red big n-length">当类型为电缆时，展示（预抽取长度）</p><p class="red big n-name">当类型为电缆时，展示（电缆名称）</p><p class="red big n-new">当类型为新品的时候，资产号改为（采购订单号）</p><p class="red big n-level">类型为电缆时，展示（等级+横截面）</p>
  </div></div>
  <div class="shot">
    <div class="sheet">
      <div class="ln one"><label for="out-type">派单类型</label><input id="out-type" type="text" value="出库"></div>
      <div class="ln two">
        <label for="out-code">项目编码</label><input id="out-code" type="text">
        <label for="out-date">出库日期</label><input id="out-date" type="text">
        <span>回单</span><button type="button">点击上传</button>
        <label for="out-no" class="no">交接单号</label><input id="out-no" type="text" class="dark">
      </div>
      <h4>信息</h4>
      <table class="xl x-out">
        <thead><tr><th>项目名称</th><th>物料描述</th><th>资产编号</th><th>可出库数量</th><th class="r">完单数量</th><th class="r">单位</th><th class="r">自家仓库</th><th class="r">自家库位</th><th class="r">终点仓库</th></tr></thead>
        <tbody>
        <tr><td></td><td></td><td></td><td></td><td></td><td></td><td></td><td></td><td></td></tr>
        <tr><td></td><td></td><td></td><td></td><td></td><td></td><td></td><td></td><td></td></tr>
        <tr><td></td><td></td><td></td><td></td><td></td><td></td><td></td><td></td><td></td></tr>
        <tr><td></td><td></td><td></td><td></td><td></td><td></td><td></td><td></td><td></td></tr>
        <tr><td></td><td></td><td></td><td></td><td></td><td></td><td></td><td></td><td></td></tr>
        <tr><td></td><td></td><td></td><td></td><td></td><td></td><td></td><td></td><td></td></tr>
        <tr><td></td><td></td><td></td><td></td><td></td><td></td><td></td><td></td><td></td></tr>
        <tr><td></td><td></td><td></td><td></td><td></td><td></td><td></td><td></td><td></td></tr>
        <tr><td></td><td></td><td></td><td></td><td></td><td></td><td></td><td></td><td></td></tr>
        <tr><td></td><td></td><td></td><td></td><td></td><td></td><td></td><td></td><td></td></tr>
        </tbody>
      </table>
    </div>
    <svg class="point" viewBox="0 0 320 30"><path d="M4 3l303 5V4l6 9-6 7v-4z" fill="#ff1d0d" stroke="none"/></svg>
    <i class="ring"></i>
    <p class="n-dyn">可出库数量是根据入库完单数动态显示的</p>
  </div>
</section>

<!-- 6: completion detail -->
<section class="win w6">
  <aside class="side"><h2>昕润物流</h2>
    <ul class="menu">
      <li><a href="#"><svg><use href="#home"/></svg>首页</a></li>
      <li class="g"><a href="#"><svg><use href="#user"/></svg>用户管理</a></li>
      <li class="g"><a href="#"><svg><use href="#car"/></svg>车辆管理</a></li>
      <li class="g hot"><a href="#"><svg><use href="#file"/></svg>计划管理</a></li>
      <li class="g"><a href="#"><svg><use href="#grid"/></svg>仓库管理</a></li>
      <li class="g"><a href="#"><svg><use href="#copy"/></svg>库存管理</a></li>
      <li class="g"><a href="#"><svg><use href="#pay"/></svg>财务管理</a></li>
      <li class="g"><a href="#"><svg><use href="#chart"/></svg>统计报表</a></li>
      <li class="g open"><a href="#"><svg><use href="#gear"/></svg>系统管理</a></li>
      <li class="sub"><a href="#">消息通知</a></li>
      <li class="sub"><a href="#">定时任务</a></li>
      <li class="sub"><a href="#">菜单管理</a></li>
      <li class="sub"><a href="#">数据字典</a></li>
      <li class="g"><a href="#"><svg><use href="#qr"/></svg>常见案例</a></li>
    </ul>
  </aside>
  <div class="main">
    <header class="top"><svg class="fold"><use href="#fold"/></svg><span>欢迎进入昕润物流管理系统</span>
      <div class="tools"><svg><use href="#search"/></svg><span class="bell"><svg><use href="#bell"/></svg><b>7</b></span><span>欢迎您，管理员</span><a href="#"><svg><use href="#exit"/></svg>退出登录</a></div></header>
    <nav class="tabs"><a href="#">首页</a><a href="#" class="on">计划列表</a></nav>
    <div class="panel">
      <form class="filter wide">
        <label><span>计划类型:</span><span class="sel"><select class="ph"><option>请选择计划类型</option></select><svg><use href="#v"/></svg></span></label>
        <label><span>交接单号:</span><input type="text" placeholder="请输入交接单号"></label>
        <label><span>资产编号:</span><input type="text" placeholder="请输入资产编号"></label>
        <label><span>项目编号:</span><input type="text" placeholder="请输入项目编号"></label>
        <label><span>完成状态:</span><span class="sel"><select class="ph"><option>请选择完成状态</option></select><svg><use href="#v"/></svg></span></label>
      </form>
      <div class="btns"><button type="button" class="btn"><svg><use href="#search"/></svg>查询</button><button type="button" class="btn"><svg><use href="#reload"/></svg>重置</button></div>
      <div class="alert">已选择 <b>3</b>项</div>
      <table class="grid t3">
        <thead><tr><th><input type="checkbox" checked aria-label="全选"></th><th>计划类型</th><th></th><th>完成状态</th><th>操作</th></tr></thead>
        <tbody>
        <tr><td><input type="checkbox" checked aria-label="选择"></td><td>配变电</td><td></td><td>未完成</td><td class="ops"><a href="#">详情</a><a href="#">删除</a><a href="#">派单</a><a href="#">完单</a><a href="#">计划状态</a></td></tr>
        <tr><td><input type="checkbox" checked aria-label="选择"></td><td>配变电</td><td></td><td>未完成</td><td class="ops"><a href="#">详情</a><a href="#">删除</a><a href="#">派单</a><a href="#">完单</a><a href="#">计划状态</a></td></tr>
        <tr><td><input type="checkbox" checked aria-label="选择"></td><td>线路</td><td></td><td>未完成</td><td class="ops"><a href="#">详情</a><a href="#">删除</a><a href="#">派单</a><a href="#">完单</a><a href="#">计划状态</a></td></tr>
        </tbody>
      </table>
      <div class="pager in"><span>1-3 共3条</span><button type="button" aria-label="上一页"><svg class="dim"><use href="#lt"/></svg></button><button type="button" class="on">1</button><button type="button" aria-label="下一页"><svg class="dim"><use href="#gt"/></svg></button><span class="sel"><select aria-label="每页条数"><option>10 条/页</option></select><svg><use href="#v"/></svg></span></div>
    </div>
  </div>
  <div class="mask low"><div class="modal d6" role="dialog" aria-label="完单详情">
    <button type="button" class="close" aria-label="关闭"><svg><use href="#x"/></svg></button>
    <div class="body">
      <h3>完单详情</h3>
      <table class="grid t-done">
        <thead><tr><th>派单类型</th><th>目标仓库</th><th></th><th>完单数量</th><th>单位</th><th>回单图片</th><th>是否异常</th><th>异常原因</th><th>异常照片1</th><th>异常照片2</th><th></th></tr></thead>
        <tbody>
        <tr class="hit"><td>出库</td><td>荷花路</td><td></td><td></td><td></td><td></td><td></td><td></td><td></td><td></td><td></td></tr>
        <tr><td>入库</td><td>荷花路</td><td></td><td></td><td></td><td></td><td></td><td></td><td></td><td></td><td></td></tr>
        <tr><td>入库</td><td>荷花路</td><td></td><td></td><td></td><td></td><td></td><td></td><td></td><td></td><td></td></tr>
        <tr><td>入库</td><td>荷花路</td><td></td><td></td><td></td><td></td><td></td><td></td><td></td><td></td><td></td></tr>
        <tr><td>入库</td><td>荷花路</td><td></td><td></td><td></td><td></td><td></td><td></td><td></td><td></td><td></td></tr>
        </tbody>
      </table>
      <div class="pager"><span>1-5 共10条</span><button type="button" aria-label="上一页"><svg class="dim"><use href="#lt"/></svg></button><button type="button" class="on">1</button><button type="button">2</button><button type="button" aria-label="下一页"><svg><use href="#gt"/></svg></button><span class="sel"><select aria-label="每页条数"><option>5 条/页</option></select><svg><use href="#v"/></svg></span><label>跳至<input type="text">页</label></div>
    </div>
    <footer><button type="button" class="plain">关 闭</button></footer>
    <div class="cover c-bin"><span>库位</span><span>任务日期</span><span>物料描述</span></div><div class="cover c-last"></div>
  </div></div>
  <div class="widget"><svg><use href="#sun"/></svg></div>
</section>

<!-- 7: plan settlement -->
<section class="win w7">
  <aside class="side"><h2>昕润物流</h2>
    <ul class="menu">
      <li><a href="#"><svg><use href="#home"/></svg>首页</a></li>
      <li class="g"><a href="#"><svg><use href="#user"/></svg>用户管理</a></li>
      <li class="g"><a href="#"><svg><use href="#car"/></svg>车辆管理</a></li>
      <li class="g"><a href="#"><svg><use href="#file"/></svg>计划管理</a></li>
      <li class="g"><a href="#"><svg><use href="#grid"/></svg>仓库管理</a></li>
      <li class="g"><a href="#"><svg><use href="#copy"/></svg>库存管理</a></li>
      <li class="g open"><a href="#"><svg><use href="#pay"/></svg>财务管理</a></li>
      <li class="sub on"><a href="#">计划结算</a></li>
      <li class="sub"><a href="#">出入库台账</a></li>
      <li class="sub"><a href="#">年度出入台账</a></li>
      <li class="sub"><a href="#">物料余留台账</a></li>
      <li class="g"><a href="#"><svg><use href="#chart"/></svg>统计报表</a></li>
      <li class="g"><a href="#"><svg><use href="#gear"/></svg>系统管理</a></li>
      <li class="g"><a href="#"><svg><use href="#qr"/></svg>常见案例</a></li>
    </ul>
  </aside>
  <div class="main">
    <header class="top"><svg class="fold"><use href="#fold"/></svg><span>欢迎进入昕润物流管理系统</span>
      <div class="tools"><svg><use href="#search"/></svg><span class="bell"><svg><use href="#bell"/></svg><b>7</b></span><span>欢迎您，管理员</span><a href="#"><svg><use href="#exit"/></svg>退出登录</a></div></header>
    <nav class="tabs"><a href="#">首页</a><a href="#">计划列表</a><a href="#" class="on">计划结算</a><a href="#">新品/临措</a></nav>
    <div class="panel p7">
      <form class="filter">
        <label><span></span><input type="text" aria-label="项目编号"></label>
        <label><span></span><input type="text" aria-label="项目名称"></label>
        <label><span></span><input type="text" aria-label="完成状态"></label>
        <div class="btns"><button type="button" class="btn">查询</button><button type="button" class="btn">重置</button></div>
      </form>
      <div class="alert"></div>
      <table class="grid t7">
        <thead><tr><th></th><th>操作</th></tr></thead>
        <tbody><tr><td></td><td class="ops"><a href="#">详情</a><a href="#">结算</a></td></tr></tbody>
      </table>
      <div class="pager in"><button type="button" aria-label="上一页"><svg class="dim"><use href="#lt"/></svg></button><button type="button" class="on">1</button><button type="button" aria-label="下一页"><svg class="dim"><use href="#gt"/></svg></button><span class="sel"><select aria-label="每页条数"><option>10 条/页</option></select><svg><use href="#v"/></svg></span></div>
    </div>
  </div>
  <div class="mask"><div class="modal d7" role="dialog" aria-label="计划结算详情页面">
    <button type="button" class="close" aria-label="关闭"><svg><use href="#x"/></svg></button>
    <div class="body">
      <h3>计划结算详情页面</h3>
      <table class="grid t-settle">
        <thead><tr><th></th><th></th><th></th><th></th></tr></thead>
        <tbody><tr class="hit"><td></td><td></td><td></td><td></td></tr><tr><td></td><td></td><td></td><td></td></tr><tr><td></td><td></td><td></td><td></td></tr><tr><td></td><td></td><td></td><td></td></tr><tr><td></td><td></td><td></td><td></td></tr></tbody>
      </table>
      <div class="pager"><span>1-5 共6条</span><button type="button" aria-label="上一页"><svg class="dim"><use href="#lt"/></svg></button><button type="button" class="on">1</button><button type="button">2</button><button type="button" aria-label="下一页"><svg><use href="#gt"/></svg></button><span class="sel"><select aria-label="每页条数"><option>5 条/页</option></select><svg><use href="#v"/></svg></span><label>跳至<input type="text">页</label></div>
    </div>
    <footer><button type="button" class="plain">关 闭</button></footer>
    <div class="draft">
      <p>新品根据采购订单号统计数量，其他根据物料统计数量</p>
      <table>
        <thead><tr><th>物料描述</th><th>入库数量</th><th>出库数量</th><th>采购订单号</th></tr></thead>
        <tbody><tr><td></td><td></td><td></td><td></td></tr><tr><td></td><td></td><td></td><td></td></tr></tbody>
      </table>
    </div>
  </div></div>
  <p class="red n-settle">计划结算页面查询：项目编号相同的所有计划都是已完成的状态，才会结算</p>
</section>

<!-- 8: expanded plan list -->
<section class="win w8">
  <aside class="side"><h2>昕润物流</h2>
    <ul class="menu">
      <li><a href="#"><svg><use href="#home"/></svg>首页</a></li>
      <li class="g"><a href="#"><svg><use href="#user"/></svg>用户管理</a></li>
      <li class="g"><a href="#"><svg><use href="#car"/></svg>车辆管理</a></li>
      <li class="g hot"><a href="#"><svg><use href="#file"/></svg>计划管理</a></li>
      <li class="g"><a href="#"><svg><use href="#grid"/></svg>仓库管理</a></li>
      <li class="g"><a href="#"><svg><use href="#copy"/></svg>库存管理</a></li>
      <li class="g"><a href="#"><svg><use href="#pay"/></svg>财务管理</a></li>
      <li class="g"><a href="#"><svg><use href="#chart"/></svg>统计报表</a></li>
      <li class="g open"><a href="#"><svg><use href="#gear"/></svg>系统管理</a></li>
      <li class="sub"><a href="#">消息通知</a></li>
      <li class="sub"><a href="#">定时任务</a></li>
      <li class="sub"><a href="#">菜单管理</a></li>
    </ul>
  </aside>
  <div class="main">
    <header class="top"><svg class="fold"><use href="#fold"/></svg><span>欢迎进入昕润物流管理系统</span>
      <div class="tools"><svg><use href="#search"/></svg><span class="bell"><svg><use href="#bell"/></svg><b>7</b></span><span>欢迎您，管理员</span><a href="#"><svg><use href="#exit"/></svg>退出登录</a></div></header>
    <nav class="tabs"><a href="#">首页</a><a href="#" class="on">计划列表</a></nav>
    <div class="panel">
      <form class="filter wide">
        <label><span>计划类型:</span><span class="sel"><select class="ph"><option>请选择计划类型</option></select><svg><use href="#v"/></svg></span></label>
        <label><span>交接单号:</span><input type="text" placeholder="请输入交接单号"></label>
        <label><span>资产编号:</span><input type="text" placeholder="请输入资产编号"></label>
        <label><span>项目编号:</span><input type="text" placeholder="请输入项目编号"></label>
        <label><span>完成状态:</span><span class="sel"><select class="ph"><option>请选择完成状态</option></select><svg><use href="#v"/></svg></span></label>
      </form>
      <div class="btns"><button type="button" class="btn"><svg><use href="#search"/></svg>查询</button><button type="button" class="btn"><svg><use href="#reload"/></svg>重置</button><button type="button" class="btn green"><svg><use href="#plus"/></svg>新建</button><button type="button" class="btn"><svg><use href="#import"/></svg>导入</button><button type="button" class="btn"><svg><use href="#down"/></svg>导出</button><button type="button" class="btn cyan"><svg><use href="#search"/></svg>今日派单</button><button type="button" class="btn cyan"><svg><use href="#login"/></svg>合并派单</button><button type="button" class="btn cyan"><svg><use href="#check"/></svg>合并完单</button><a href="#" class="more">收起<svg><use href="#up"/></svg></a><button type="button" class="log first">派单记录</button><button type="button" class="log">完单记录</button></div>
      <div class="alert">已选择 <b>3</b>项<a href="#">清空</a></div>
      <table class="grid t8">
        <thead><tr><th><input type="checkbox" checked aria-label="全选"></th><th>计划类型</th><th>交接单号</th><th>资产编号</th><th>项目名称</th><th>项目编码</th><th>入库日期</th><th>工程地址</th><th>现场联系人</th><th>联系电话</th><th>废旧物料描述</th><th>派单状态</th><th>完成状态</th><th>操作</th></tr></thead>
        <tbody>
        <tr><td><input type="checkbox" checked aria-label="选择"></td><td>配变电</td><td>3000020553</td><td>0203100078...</td><td>浦东祖冲之路（高斯路...</td><td>1709211800...</td><td>2020-03-01</td><td>上海市杨浦区</td><td>张爱华</td><td>1377446332...</td><td>废旧电力电缆(AC3...</td><td>已派单</td><td>未完成</td><td class="ops"><a href="#">详情</a><a href="#">删除</a><a href="#">派单</a><a href="#">完单</a><a href="#">计划状态</a></td></tr>
        <tr><td><input type="checkbox" checked aria-label="选择"></td><td>配变电</td><td>3000020554</td><td></td><td>浦东10kV 6号网...</td><td>1809211500...</td><td>2020-04-05</td><td>测试区域111</td><td>陆永飞</td><td>1302313235...</td><td>废旧电力电缆(AC1...</td><td>已派单</td><td>未完成</td><td class="ops"><a href="#">详情</a><a href="#">删除</a><a href="#">派单</a><a href="#">完单</a><a href="#">计划状态</a></td></tr>
        <tr><td><input type="checkbox" checked aria-label="选择"></td><td>线路</td><td>3000021195</td><td></td><td>浦东10kV流3施湾...</td><td>1809211600...</td><td></td><td></td><td>杨凯杰</td><td>1871783909...</td><td>废旧柱上断路器</td><td>已派单</td><td>未完成</td><td class="ops"><a href="#">详情</a><a href="#">删除</a><a href="#">派单</a><a href="#">完单</a><a href="#">计划状态</a></td></tr>
        </tbody>
      </table>
      <div class="pager in"><span>1-3 共3条</span><button type="button" aria-label="上一页"><svg class="dim"><use href="#lt"/></svg></button><button type="button" class="on">1</button><button type="button" aria-label="下一页"><svg class="dim"><use href="#gt"/></svg></button><span class="sel"><select aria-label="每页条数"><option>10 条/页</option></select><svg><use href="#v"/></svg></span></div>
    </div>
  </div>
  <i class="scroll"></i>
</section>

</main>
</body>
</html>
```
FILE: styles.css
```css
* { box-sizing: border-box; }
body { margin: 0; background: #fff; color: #595959; font: 8px/12px "Noto Sans CJK SC", "Noto Sans", sans-serif; }
h2, h3, h4, p, ul { margin: 0; padding: 0; }
ul { list-style: none; }
a { color: #1890ff; text-decoration: none; }
button, input, select { font: inherit; color: inherit; margin: 0; padding: 0; }
svg { width: 8px; height: 8px; flex: none; fill: none; stroke: currentColor; stroke-width: 1.3; }
em { color: #f5222d; font-style: normal; }
.defs { position: absolute; width: 0; height: 0; }
.board { overflow: hidden; }

/* windows on the board, each one stacked over the one before */
.win { position: relative; isolation: isolate; display: flex; min-height: 538px; background: #f0f2f5; }
.w1 { margin: 24px 38px 0 37px; }
.w2 { margin: 91px 37px 0 37px; }
.w3 { margin: -120px 14px 0 60px; }
.w4 { margin: -178px 14px 0 60px; }
.w5 { margin: 59px 18px 0 56px; }
.w6 { margin: -115px 29px 0 45px; }
.w7 { margin: 67px 12px 0 62px; }
.w8 { margin: 144px 62px 0 12px; min-height: 0; height: 358px; overflow: hidden; }

/* sidebar */
.side { flex: none; width: 115px; background: #001529; box-shadow: 1px 0 4px rgba(0, 21, 41, .35); z-index: 1; }
.side h2 { height: 35px; background: #002140; color: #fff; font-size: 10px; font-weight: 700; line-height: 36px; text-align: center; padding-right: 8px; }
.menu { display: grid; grid-auto-rows: 1fr; height: 386px; }
.menu.m13 { height: 358px; }
.w3 .menu, .w8 .menu { height: 331px; }
.menu li { display: flex; flex-direction: column; justify-content: center; }
.menu a { display: flex; align-items: center; gap: 6px; height: 24px; padding: 0 12px 0 14px; color: rgba(255, 255, 255, .65); }
.menu .sub { background: #000c17; }
.menu .sub a { padding-left: 28px; }
.menu .sub.on a { background: #1890ff; color: #fff; }
.menu .open a, .menu .hot a { color: #fff; }
.menu .g a::after { content: ""; width: 3px; height: 3px; margin: -2px 0 0 auto; border: solid currentColor; border-width: 0 1px 1px 0; transform: rotate(45deg); }
.menu .open a::after { margin-top: 2px; transform: rotate(225deg); }

/* top bars */
.main { flex: 1; min-width: 0; }
.top { display: flex; align-items: center; height: 35px; padding: 0 15px 0 10px; background: #fff; border-bottom: 1px solid #ececec; color: #262626; }
.w1 .main, .w8 .main { margin-right: 4px; }
.fold { width: 12px; height: 11px; margin: -2px 11px 0 0; stroke-width: 1; }
.tools { display: flex; align-items: center; margin-left: auto; }
.tools > svg { margin-right: 19px; }
.tools a { display: flex; align-items: center; gap: 3px; margin-left: 16px; color: #262626; }
.bell { position: relative; display: flex; margin-right: 20px; }
.bell svg { height: 9px; }
.bell b { position: absolute; left: 5px; top: -9px; width: 11px; height: 11px; border-radius: 6px; background: #f5222d; color: #fff; font-size: 7px; font-weight: 400; line-height: 11px; text-align: center; }
.tabs { display: flex; gap: 5px; height: 29px; padding-left: 12px; background: #fff; border-bottom: 1px solid #d9d9d9; }
.tabs a { height: 25px; padding: 0 14px; line-height: 25px; color: #595959; }
.tabs a.on { color: #1890ff; border-bottom: 1px solid #1890ff; }
.scroll { position: absolute; right: 0; top: 0; bottom: 0; width: 4px; background: #f5f5f5; }

/* content panel */
.panel { margin: 7px 7px 0; padding: 14px 14px 30px; min-height: 262px; background: #fff; }
.p1, .p2 { min-height: 415px; }
.p7 { min-height: 178px; padding-bottom: 0; }
.filter { display: flex; gap: 14px; }
.filter.wide { gap: 7px; }
.filter label, .fields label, .vrow label { display: flex; align-items: center; color: #262626; }
.filter label > span:first-child { width: 44px; white-space: nowrap; }
.filter input, .filter .sel { width: 101px; height: 18px; }
.filter.wide input, .filter.wide .sel { width: 107px; }
input[type="text"] { border: 1px solid #d9d9d9; border-radius: 2px; background: #fff; padding: 0 6px; outline: 0; color: #595959; }
input::placeholder { color: #bfbfbf; opacity: 1; }
.sel { position: relative; display: inline-flex; flex: none; height: 18px; }
.sel select { width: 100%; height: 100%; border: 1px solid #d9d9d9; border-radius: 2px; background: #fff; padding: 0 14px 0 6px; appearance: none; color: #595959; }
.sel select.ph { color: #bfbfbf; }
.sel svg { position: absolute; right: 7px; top: 50%; width: 6px; height: 6px; margin-top: -3px; color: #bfbfbf; }
.sel.focus select { border-color: #40a9ff; }
.btns { display: flex; align-items: center; gap: 4px; }
.filter + .btns { margin-top: 14px; }
.btn { display: inline-flex; align-items: center; justify-content: center; gap: 5px; height: 18px; padding: 0 9px; border: 0; border-radius: 2px; background: #1890ff; color: #fff; white-space: nowrap; }
.btn.green { background: #00d900; }
.btn.cyan { background: #00ced1; }
.more { display: flex; align-items: center; gap: 3px; margin-left: 3px; }
.more svg { width: 7px; height: 7px; }
.log { height: 18px; padding: 0 5px; border: 2px solid #1fad14; background: #fff; color: #ff1d0d; font-size: 12px; line-height: 12px; margin-left: 18px; }
.log.first { margin-left: 14px; }
.alert { height: 22px; margin: 14px 0 10px; padding-left: 22px; border: 1px solid #91d5ff; border-radius: 2px; background: #e6f7ff; line-height: 20px; }
.alert b { color: #1890ff; font-weight: 500; }
.alert a { margin-left: 16px; }

/* data tables */
.grid { width: 100%; table-layout: fixed; border-collapse: separate; border-spacing: 0; border: solid #e8e8e8; border-width: 1px 0 0 1px; border-radius: 2px; }
.grid th, .grid td { height: 26px; padding: 0 2px; border: solid #e8e8e8; border-width: 0 1px 1px 0; text-align: center; font-weight: 400; overflow: hidden; }
.grid th { background: #fafafa; color: #262626; }
.t1 td, .t8 td, .t1 th, .t8 th, .t2 td, .t3 td { white-space: nowrap; }
.grid .tint td { background: #fafeff; }
.grid .hit td, .rows .hit td { background: #e6f7ff; }
.t8 td, .t3 td { background: #fafafa; }
.ops a + a::before { content: ""; display: inline-block; width: 1px; height: 6px; margin: 0 5px 0 4px; background: #e8e8e8; }
input[type="checkbox"] { appearance: none; display: inline-block; width: 9px; height: 9px; border: 1px solid #d9d9d9; border-radius: 1px; background: #fff; vertical-align: middle; position: relative; }
input[type="checkbox"]:checked { background: #1890ff; border-color: #1890ff; }
input[type="checkbox"]:checked::after { content: ""; position: absolute; left: 2px; top: 0; width: 3px; height: 5px; border: solid #fff; border-width: 0 1px 1px 0; transform: rotate(45deg); }
.t1, .t2 { height: 290px; }
.t3, .t8 { height: 106px; }
.t1 th:nth-child(1), .t8 th:nth-child(1), .t2 th:nth-child(1), .t3 th:nth-child(1) { width: 35px; }
.t1 th:nth-child(2), .t8 th:nth-child(2), .t2 th:nth-child(2), .t3 th:nth-child(2) { width: 46px; }
.t1 th:nth-child(3), .t8 th:nth-child(3), .t2 th:nth-child(3) { width: 58px; }
.t1 th:nth-child(4), .t1 th:nth-child(6), .t8 th:nth-child(4), .t8 th:nth-child(6), .t8 th:nth-child(8) { width: 64px; }
.t1 th:nth-child(7) { width: 46px; }
.t1 th:nth-child(8) { width: 85px; }
.t1 th:nth-child(9), .t8 th:nth-child(9) { width: 55px; }
.t1 th:nth-child(10), .t8 th:nth-child(10) { width: 65px; }
.t1 th:nth-child(11) { width: 99px; }
.t1 th:nth-child(12), .t1 th:nth-child(13), .t8 th:nth-child(12), .t8 th:nth-child(13), .t2 th:nth-child(5), .t3 th:nth-child(4) { width: 46px; }
.t8 th:nth-child(7) { width: 56px; }
.t8 th:nth-child(11) { width: 89px; }
.t1 th:last-child, .t2 th:last-child, .t3 th:last-child, .t8 th:last-child { width: 145px; }
.t7 th:last-child { width: 84px; }

.pager { display: flex; align-items: center; justify-content: flex-end; height: 14px; margin-top: 10px; }
.pager.in { padding-right: 4px; }
.pager > span:first-child { margin-right: 5px; }
.pager button { display: flex; align-items: center; justify-content: center; width: 14px; height: 14px; border: 0; background: none; }
.pager button.on { border: 1px solid #1890ff; border-radius: 2px; color: #1890ff; }
.pager button svg { width: 6px; height: 6px; }
.pager .dim { color: #bfbfbf; }
.pager .sel { width: 49px; height: 14px; margin-left: 1px; }
.d2 .pager .sel, .d6 .pager .sel, .d7 .pager .sel { width: 45px; }
.pager .sel select { padding: 0 10px 0 4px; }
.pager .sel svg { right: 5px; }
.pager label { display: flex; align-items: center; gap: 5px; margin-left: 5px; }
.pager input[type="text"] { width: 25px; height: 14px; }

/* dialogs */
.mask { position: absolute; inset: 0; display: flex; justify-content: center; align-items: flex-start; padding-top: 58px; background: rgba(0, 0, 0, .45); z-index: 2; }
.w2 .mask, .w7 .mask { padding-top: 86px; }
.mask.low { padding-top: 115px; }
.modal { position: relative; width: 689px; background: #fff; border-radius: 2px; box-shadow: 0 2px 7px rgba(0, 0, 0, .2); }
.modal.d2 { width: 804px; }
.modal.d7 { width: 861px; }
.modal > header { height: 31px; padding: 9px 14px 0; border-bottom: 1px solid #e8e8e8; font-size: 9px; }
.modal .body { padding: 0 14px; }
.modal > footer { display: flex; align-items: center; justify-content: flex-end; gap: 5px; height: 30px; padding: 0 9px; border-top: 1px solid #e8e8e8; }
.plain { width: 37px; height: 18px; border: 1px solid #d9d9d9; border-radius: 2px; background: #fff; }
.plain.ok { background: #1890ff; border-color: #1890ff; color: #fff; }
.close { position: absolute; right: 12px; top: 11px; width: 8px; height: 10px; border: 0; background: none; color: #8c8c8c; display: flex; align-items: center; justify-content: center; }
.close svg { width: 6px; height: 8px; }

.modal.d2 .body { padding-top: 26px; padding-bottom: 23px; }
.t-disp th:nth-child(1), .t-disp th:nth-child(3) { width: 46px; }
.t-disp th:nth-child(2) { width: 75px; }
.t-disp th:nth-child(6), .t-disp th:nth-child(7) { width: 57px; }
.t-disp th:nth-child(8) { width: 66px; }
.t-disp th:nth-child(9) { width: 69px; }
.t-disp th:nth-child(10) { width: 73px; }
.grid.t-disp td { height: 38px; padding: 0 5px; }
.grid.t-disp td:nth-child(7), .grid.t-disp td:nth-child(6) { padding: 0; }

.fields { display: flex; gap: 32px; padding: 16px 0 0 6px; }
.fields label > span:first-child { width: 45px; white-space: nowrap; }
.fields .sel { width: 91px; }
.fields .sel.date { width: 112px; }
.date input { width: 100%; }
.date svg { width: 8px; height: 8px; margin-top: -4px; }
.mtabs { display: flex; gap: 18px; margin-top: 20px; border-bottom: 1px solid #e8e8e8; }
.mtabs a { height: 24px; padding: 0 9px; margin-bottom: -1px; line-height: 26px; color: #595959; }
.mtabs a.on { color: #1890ff; border-bottom: 1px solid #1890ff; }
.rows { width: 100%; table-layout: fixed; border-collapse: separate; border-spacing: 0; border: 1px solid #e8e8e8; border-right: 4px solid #f0f0f0; border-bottom: 0; }
.rows th, .rows td { padding: 0; border-bottom: 1px solid #e8e8e8; text-align: center; font-weight: 400; white-space: nowrap; }
.rows th { height: 21px; }
.rows td { height: 35px; }
.t-mat { margin: 10px 0 14px; }
.t-mat input { width: 48px; height: 18px; }
.t-mat th:nth-child(1) { width: 98px; }
.t-mat th:nth-child(2) { width: 117px; }
.t-mat th:nth-child(3) { width: 119px; }
.t-mat th:nth-child(4) { width: 50px; }
.t-mat th:nth-child(5), .t-mat th:nth-child(7) { width: 101px; }
.t-mat th:nth-child(6) { width: 49px; }
.add { margin: 9px 0 5px; width: 48px; }
.t-car { margin-bottom: 14px; }
.t-car th:nth-child(1) { width: 27px; }
.t-car th:nth-child(2) { width: 128px; }
.t-car th:nth-child(3) { width: 68px; }
.t-car .sel { width: 126px; vertical-align: middle; }
.t-car td input[type="text"] { width: 60px; height: 18px; }

.modal.d5 .body { padding: 9px 0 10px 17px; }
.modal.d6 .body, .modal.d7 .body { padding-bottom: 23px; }
.d6 h3, .d7 h3 { color: #262626; font-size: 10px; font-weight: 400; height: 23px; line-height: 29px; }
.grid.t-done th { padding: 0; }
.t-done th:nth-child(1), .t-done th:nth-child(4), .t-done th:nth-child(6), .t-done th:nth-child(7) { width: 47px; }
.t-done th:nth-child(2) { width: 46px; }
.t-done th:nth-child(3) { width: 162px; }
.t-done th:nth-child(5) { width: 28px; }
.t-done th:nth-child(8) { width: 48px; }
.t-done th:nth-child(9) { width: 52px; }
.t-done th:nth-child(10) { width: 53px; }
.t-done, .t-settle { height: 159px; }
.d7 h3 { height: 31px; line-height: 34px; padding-left: 14px; }
.t-settle th:nth-child(1) { width: 171px; }
.t-settle th:nth-child(3) { width: 105px; }
.t-settle th:nth-child(4) { width: 204px; }

/* spreadsheet-like drafts */
.sheet { height: 211px; border: 2px solid #385d8a; background: #fff; color: #000; padding-left: 16px; font-size: 9px; }
.sheet input, .sheet button { height: 13px; width: 50px; border: 1px solid #bfbfbf; border-radius: 0; background: #fff; padding: 0 5px; color: #000; line-height: 11px; text-align: left; }
.sheet .dark { width: 96px; border-color: #797979; }
.ln { display: grid; align-items: center; width: 607px; padding-left: 3px; }
.d5 .ln, .d5 h4 { width: 569px; }
.ln.one { grid-template-columns: 42px 50px; height: 20px; border-bottom: 1px solid #6f93c4; }
.ln.one label { font-weight: 700; }
.ln.two { grid-template: 25px / 39px 134px 45px 80px 28px 123px 60px 96px; height: 25px; color: #ff1d0d; }
.d5 .ln.two { grid-template-columns: 39px 125px 53px 79px 28px 84px 60px 96px; }
.shot .ln.two button { width: 92px; }
.ln .no { width: 40px; color: #262626; font-size: 10px; line-height: 14px; }
.d5 .ln .no { align-self: start; margin-top: 5px; }
.sheet h4 { width: 607px; height: 13px; padding-left: 3px; border-bottom: 1px solid #95b3d7; font-size: 9px; line-height: 13px; }
.xl { table-layout: fixed; border-collapse: collapse; margin-top: 10px; height: 114px; }
.xl th, .xl td { height: 10px; padding: 0 0 0 1px; border: 1px solid #222; font-weight: 400; line-height: 9px; white-space: nowrap; text-align: left; }
.xl th { width: 41px; }
.xl .r { color: #ff1d0d; }
.x-out { width: 382px; }
.x-out th:nth-child(4) { width: 49px; }
.x-in { width: 548px; }
.x-in th:nth-child(5) { width: 50px; }
.xl .none { width: 85px; border-top: 0; border-right: 0; }
.shot { position: absolute; left: 211px; top: -190px; width: 694px; height: 228px; padding: 4px 10px 8px 3px; border: solid #444; border-width: 3px 1px 2px 3px; background: #fff; z-index: 3; }
.point { position: absolute; left: 200px; top: 62px; width: 320px; height: 30px; }
.ring { position: absolute; left: 146px; top: 66px; width: 46px; height: 24px; border: 1px solid #ff1d0d; border-radius: 2px; }
.n-dyn { position: absolute; left: 485px; top: 85px; width: 160px; color: #ff1d0d; font-size: 12px; line-height: 16px; }

/* reviewer's marks */
.cover { position: absolute; border: 1px solid #797979; background: #fff; }
.c-order { left: 213px; top: 150px; width: 57px; height: 281px; }
.c-out { left: 679px; top: 151px; width: 72px; height: 280px; }
.c-qty { left: 835px; top: 149px; width: 95px; height: 279px; }
.mark, .red { position: absolute; color: #333; font-size: 11px; line-height: 16px; white-space: nowrap; }
.red { color: #d9001b; font-size: 9px; }
.red.big { font-size: 10px; font-weight: 500; }
.n-plan { left: 486px; top: 156px; }
.n-instate { left: 554px; top: 143px; }
.n-inqty { left: 616px; top: 143px; }
.n-outstate { left: 697px; top: 137px; }
.n-outqty { left: 856px; top: 156px; }
.n-merge { left: 111px; top: 21px; }
.n-after { left: 323px; top: 21px; }
.n-contact { left: 684px; top: 78px; }
.n-title { position: absolute; left: 5px; top: 9px; color: #333; font-size: 18px; line-height: 24px; }
.n-title.flush { left: 0; top: 6px; }
.n-cable { left: 266px; top: 103px; }
.n-same { left: 50px; top: 63px; }
.wire { position: absolute; width: 58px; height: 15px; border: 1px solid #797979; background: #fff; }
.wire.a1 { left: 421px; top: 149px; }
.wire.b1 { left: 498px; top: 152px; }
.wire.e1 { left: 574px; top: 153px; }
.wire.a2 { left: 421px; top: 184px; }
.wire.b2 { left: 498px; top: 184px; }
.wire.e2 { left: 574px; top: 184px; }
.wire.staff { left: 551px; top: 42px; width: 111px; height: 29px; border-color: #c9c9c9; }
.n-staff { left: 519px; top: 50px; }
.n-multi { left: 562px; top: 81px; }
.n-single, .n-del { font-size: 10px; }
.n-single { left: 90px; top: 173px; }
.c-car { left: 239px; top: 143px; width: 160px; height: 86px; }
.n-only { left: 140px; top: 13px; }
.n-asset { left: 362px; top: 13px; }
.n-del { left: 9px; top: 97px; }
.tick { position: absolute; left: 9px; display: flex; align-items: center; gap: 2px; color: #333; font-size: 9px; line-height: 12px; }
.tick input[type="checkbox"] { width: 6px; height: 6px; border-color: #797979; border-radius: 0; }
.tick input[type="checkbox"]:checked { background: #fff; border-color: #797979; }
.tick input[type="checkbox"]:checked::after { left: 1px; top: -1px; width: 2px; height: 4px; border-color: #333; }
.k1 { top: 123px; }
.k2 { top: 138px; }
.k3 { top: 153px; }
.k4 { top: 173px; }
.k5 { top: 188px; }
.arrows { position: absolute; left: 0; top: 0; width: 689px; height: 292px; stroke: none; pointer-events: none; }
.n-weight { left: 288px; top: 130px; }
.n-length { left: 168px; top: 146px; }
.n-name { left: 134px; top: 165px; }
.n-new { left: 66px; top: 192px; }
.n-level { left: 75px; top: 217px; }
.c-bin { left: 110px; top: 24px; width: 160px; height: 157px; padding: 6px 0 0 9px; display: flex; color: #262626; font-size: 10px; line-height: 14px; }
.c-bin span + span { margin-left: 15px; }
.c-bin span:last-child { margin-left: 24px; }
.c-last { left: 594px; top: 21px; width: 86px; height: 160px; }
.n-settle { left: 220px; top: 62px; font-size: 16px; font-weight: 700; line-height: 24px; z-index: 3; }
.draft { position: absolute; left: 13px; top: 34px; width: 828px; height: 163px; padding: 3px 66px 0 48px; border: 1px solid #797979; border-left: 0; background: #fff; }
.draft p { color: #d9001b; font-size: 11px; font-weight: 500; line-height: 16px; text-align: center; padding-left: 8px; }
.draft table { width: 100%; margin-top: 3px; table-layout: fixed; border-collapse: collapse; }
.draft th, .draft td { height: 37px; padding: 0; border: 1px solid #797979; color: #333; font-size: 11px; font-weight: 400; text-align: center; }
.draft tr:last-child td { height: 56px; }

/* form variants pasted between the dialogs */
.variants { position: absolute; left: 232px; top: -49px; width: 654px; height: 107px; padding-top: 7px; background: #fff; z-index: 3; }
.vrow { display: flex; justify-content: space-between; padding: 0 24px 0 12px; }
.vrow .sel { width: 204px; }
.vrow label > span:first-child { width: 46px; padding-right: 4px; text-align: right; white-space: nowrap; }
.vrow + .vrow { margin-top: 21px; }
.n-same + .vrow { margin-top: 19px; }
.vrow ~ .vrow { padding-left: 17px; padding-right: 28px; }

.widget { position: absolute; right: 0; bottom: 0; width: 35px; height: 36px; border-right: 10px solid #666675; background: #2c2c3a; display: flex; align-items: center; justify-content: center; z-index: 3; }
.widget svg { width: 21px; height: 22px; }
```
